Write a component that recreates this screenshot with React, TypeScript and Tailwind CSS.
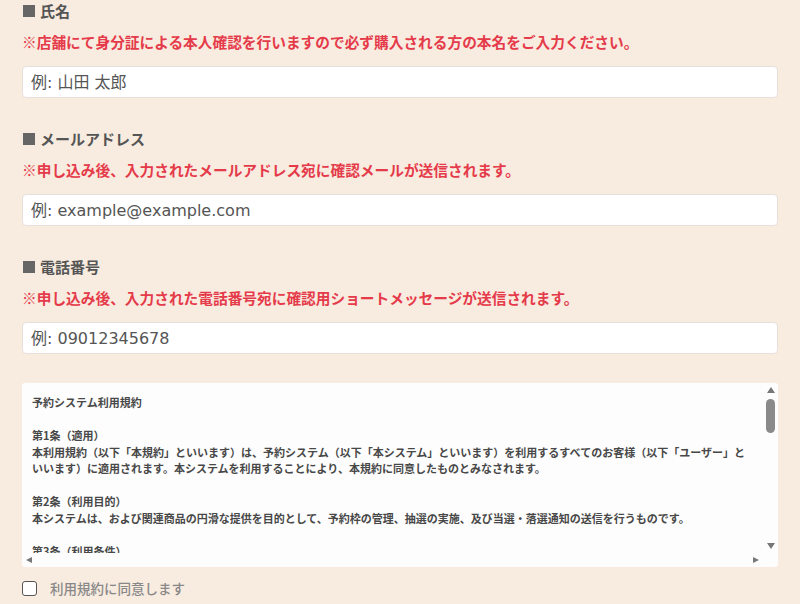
import { useState } from "react";

const fields = [
  {
    label: "氏名",
    note: "※店舗にて身分証による本人確認を行いますので必ず購入される方の本名をご入力ください。",
    placeholder: "例: 山田 太郎",
    type: "text",
  },
  {
    label: "メールアドレス",
    note: "※申し込み後、入力されたメールアドレス宛に確認メールが送信されます。",
    placeholder: "例: example@example.com",
    type: "email",
  },
  {
    label: "電話番号",
    note: "※申し込み後、入力された電話番号宛に確認用ショートメッセージが送信されます。",
    placeholder: "例: 09012345678",
    type: "tel",
  },
];

const terms = [
  "予約システム利用規約",
  "",
  "第1条（適用）",
  "本利用規約（以下「本規約」といいます）は、予約システム（以下「本システム」といいます）を利用するすべてのお客様（以下「ユーザー」といいます）に適用されます。本システムを利用することにより、本規約に同意したものとみなされます。",
  "",
  "第2条（利用目的）",
  "本システムは、および関連商品の円滑な提供を目的として、予約枠の管理、抽選の実施、及び当選・落選通知の送信を行うものです。",
  "",
  "第3条（利用条件）",
];

const font = "font-['Noto_Sans_CJK_JP','Noto_Sans',sans-serif]";

export default function App() {
  const [agreed, setAgreed] = useState(false);

  return (
    <div className={`min-h-screen bg-[#f8ebdf] px-[22px] ${font}`}>
      {fields.map((f, i) => (
        <div key={f.label} className={i === 0 ? "" : "mt-[30px]"}>
          {/* Label */}
          <div className="flex items-center gap-[5px] h-[22px] text-[15px] font-bold text-[#555]">
            <span className="w-[12px] h-[12px] bg-[#666] ml-[1px]" />
            {f.label}
          </div>

          {/* Note */}
          <p className="mt-[9px] leading-[22px] text-[14.7px] font-bold text-[#e53a4a]">{f.note}</p>

          <input
            type={f.type}
            placeholder={f.placeholder}
            className="mt-[13px] block w-full h-[32px] px-[8px] bg-white border border-[#e6e0da] rounded-[4px] font-['DejaVu_Sans','Noto_Sans_CJK_JP',sans-serif] text-[16px] text-[#333] placeholder:text-[#555] outline-none"
          />
        </div>
      ))}

      {/* Terms */}
      <div className="mt-[29px] h-[184px] bg-[#fdfdfd] rounded-[3px] flex flex-col">
        <div className="flex h-[170px]">
          <div className="flex-1 overflow-hidden pt-[11px] pl-[10px]">
            <div className="text-[11px] leading-[16.5px] font-bold text-[#484848] w-[720px]">
              {terms.map((t, i) => (
                <p key={i} className="min-h-[16.5px]">
                  {t}
                </p>
              ))}
            </div>
          </div>

          {/* vertical scrollbar */}
          <div className="w-[15px] flex flex-col items-center">
            <span className="mt-[4px] w-0 h-0 border-x-[4px] border-x-transparent border-b-[6px] border-b-[#777]" />
            <span className="mt-[6px] w-[9px] h-[34px] rounded-full bg-[#8a8a8a]" />
            <span className="mt-auto mb-[4px] w-0 h-0 border-x-[4px] border-x-transparent border-t-[6px] border-t-[#777]" />
          </div>
        </div>

        {/* horizontal scrollbar */}
        <div className="h-[14px] flex items-center">
          <span className="ml-[4px] w-0 h-0 border-y-[3.5px] border-y-transparent border-r-[6px] border-r-[#777]" />
          <span className="ml-auto mr-[19px] w-0 h-0 border-y-[3.5px] border-y-transparent border-l-[6px] border-l-[#777]" />
        </div>
      </div>

      {/* Agree */}
      <label className="mt-[10px] flex items-center gap-[13px] h-[22px] cursor-pointer">
        <input
          type="checkbox"
          checked={agreed}
          onChange={(e) => setAgreed(e.target.checked)}
          className="appearance-none w-[15px] h-[15px] border-[1.5px] border-[#555] rounded-[3px] bg-white"
        />
        <span className="text-[13.5px] text-[#888] font-medium">利用規約に同意します</span>
      </label>
    </div>
  );
}
